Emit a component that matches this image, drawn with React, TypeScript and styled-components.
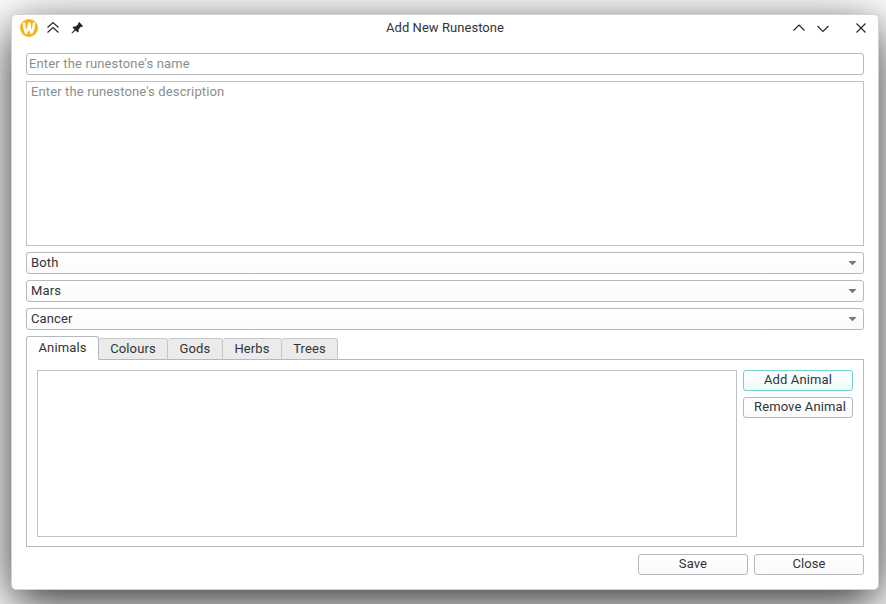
import React from 'react';
import styled, { createGlobalStyle } from 'styled-components';

const GlobalStyle = createGlobalStyle`
  * { box-sizing: border-box; }
  html, body { margin: 0; padding: 0; background: #fff; overflow: hidden; }
  body { font: 13px/20px Roboto, sans-serif; letter-spacing: 0.12px; color: #313437; }
  button, input, textarea { font: inherit; letter-spacing: inherit; color: inherit; margin: 0; outline: 0; }
`;

const Desktop = styled.div`
  width: 886px;
  height: 604px;
  padding: 14px 7px 14px 11px;
  overflow: hidden;
`;

const Window = styled.main`
  display: flex;
  flex-direction: column;
  width: 868px;
  height: 576px;
  background: #fff;
  border: 1px solid #d2d3d4;
  border-radius: 5px;
  box-shadow: 0 13px 48px rgba(0, 0, 0, 0.82);
`;

const TitleBar = styled.header`
  display: grid;
  grid-template-columns: 1fr auto 1fr;
  align-items: center;
  height: 26px;
  padding: 0 8px;
  flex: none;
`;

const Controls = styled.div<{ $end?: boolean }>`
  display: flex;
  align-items: center;
  gap: 6px;
  justify-content: ${(p) => (p.$end ? 'flex-end' : 'flex-start')};
  svg { display: block; }
`;

const Gap = styled.span`
  width: 8px;
`;

const Title = styled.h1`
  margin: 0;
  padding-bottom: 1px;
  line-height: 19px;
  font-size: 13px;
  font-weight: 400;
  letter-spacing: 0.05px;
`;

const Form = styled.div`
  display: flex;
  flex-direction: column;
  gap: 6px;
  padding: 12px 14px 0;
`;

const NameInput = styled.input`
  height: 22px;
  padding: 0 2px 2px;
  border: 1px solid #b7b8b9;
  border-radius: 3px;
  background: #fff;
  letter-spacing: 0.15px;
  &::placeholder { color: #8c8d8e; opacity: 1; }
`;

const Description = styled.textarea`
  display: block;
  height: 165px;
  padding: 0 4px;
  border: 1px solid #c0c1c2;
  border-radius: 0;
  resize: none;
  background: #fff;
  letter-spacing: 0.13px;
  &::placeholder { color: #8c8d8e; opacity: 1; }
`;

const Select = styled.div`
  display: flex;
  align-items: center;
  justify-content: space-between;
  height: 22px;
  padding: 0 6px 0 4px;
  border: 1px solid #b7b8b9;
  border-radius: 3px;
  background: linear-gradient(#fff, #fafafa);
`;

const Tabs = styled.section`
  display: flex;
  flex-direction: column;
`;

const TabBar = styled.div`
  display: flex;
  align-items: flex-end;
  height: 24px;
  z-index: 1;
`;

const Tab = styled.button<{ $width: number; $active?: boolean }>`
  width: ${(p) => p.$width}px;
  height: ${(p) => (p.$active ? 24 : 22)}px;
  padding: 0 0 1px;
  line-height: 20px;
  border: 1px solid ${(p) => (p.$active ? '#b7b8b9' : '#c6c7c8')};
  border-left-width: ${(p) => (p.$active ? 1 : 0)}px;
  border-bottom-color: ${(p) => (p.$active ? '#fff' : '#b7b8b9')};
  border-radius: 3px 3px 0 0;
  background: ${(p) => (p.$active ? '#fff' : '#ebebeb')};
`;

const Panel = styled.div`
  display: flex;
  gap: 6px;
  height: 188px;
  margin-top: -1px;
  padding: 10px;
  border: 1px solid #b7b8b9;
`;

const List = styled.div`
  flex: 1;
  height: 167px;
  border: 1px solid #c0c1c2;
`;

const Actions = styled.div`
  display: flex;
  flex-direction: column;
  gap: 6px;
`;

const Button = styled.button<{ $focus?: boolean; $shift?: number }>`
  width: 110px;
  height: 21px;
  padding: 0 0 2px ${(p) => p.$shift ?? 0}px;
  line-height: 17px;
  white-space: nowrap;
  border: 1px solid ${(p) => (p.$focus ? '#6fd3cc' : '#b7b8b9')};
  border-radius: 3px;
  background: ${(p) => (p.$focus ? 'linear-gradient(#fff, #effafa)' : 'linear-gradient(#fff, #fafafa)')};
`;

const Footer = styled.footer`
  display: flex;
  justify-content: flex-end;
  gap: 6px;
  margin-top: 1px;
`;

const WaylandLogo = () => (
  <svg width="18" height="18" viewBox="0 0 18 18">
    <circle cx="9" cy="9" r="9" fill="#f3b61c" />
    <path d="M4 3.6C4.3 8.6 5 11.8 6.1 13.8C7.7 11.3 8.8 8.2 9.4 4.8C9.4 8.6 10.2 11.8 11.5 13.8C13 11.3 13.9 7.5 14.1 3.6" fill="none" stroke="#fff" strokeWidth="2.5" strokeLinejoin="round" strokeLinecap="butt" />
  </svg>
);

const LineIcon = ({ d }: { d: string }) => (
  <svg width="18" height="18" viewBox="0 0 18 18">
    <path d={d} fill="none" stroke="#232629" strokeWidth="1.15" />
  </svg>
);

const PinIcon = () => (
  <svg width="18" height="18" viewBox="0 0 18 18">
    <path d="M11.2 3L15 6.9L14 7.9L12.9 7.8L10.6 10.4V12.4L9.6 13.4L7.5 11.4L4 14.6L3.4 14L6.5 10.5L4.5 8.4L5.5 7.6H7.5L10.2 5.2V4Z" fill="#232629" />
  </svg>
);

const DownArrow = () => (
  <svg width="9" height="5" viewBox="0 0 9 5">
    <path d="M0.5 0H8.5L4.5 4.2Z" fill="#737576" />
  </svg>
);

const tabs = [
  { label: 'Animals', width: 73 },
  { label: 'Colours', width: 69 },
  { label: 'Gods', width: 55 },
  { label: 'Herbs', width: 59 },
  { label: 'Trees', width: 56 },
];

export default function App() {
  return (
    <>
      <GlobalStyle />
      <Desktop>
        <Window>
          <TitleBar>
            <Controls>
              <WaylandLogo />
              <LineIcon d="M3.5 8.5L9 3.5L14.5 8.5M3.5 13.5L9 8.5L14.5 13.5" />
              <PinIcon />
            </Controls>
            <Title>Add New Runestone</Title>
            <Controls $end>
              <LineIcon d="M3.5 11.5L9 6L14.5 11.5" />
              <LineIcon d="M3.5 7L9 12.5L14.5 7" />
              <Gap />
              <LineIcon d="M4.5 4.5L13.5 13.5M13.5 4.5L4.5 13.5" />
            </Controls>
          </TitleBar>
          <Form>
            <NameInput placeholder="Enter the runestone's name" />
            <Description placeholder="Enter the runestone's description" />
            {['Both', 'Mars', 'Cancer'].map((value) => (
              <Select key={value}>
                <span>{value}</span>
                <DownArrow />
              </Select>
            ))}
            <Tabs>
              <TabBar>
                {tabs.map((tab, i) => (
                  <Tab key={tab.label} $width={tab.width} $active={i === 0}>{tab.label}</Tab>
                ))}
              </TabBar>
              <Panel>
                <List />
                <Actions>
                  <Button $focus>Add Animal</Button>
                  <Button $shift={4}>Remove Animal</Button>
                </Actions>
              </Panel>
            </Tabs>
            <Footer>
              <Button>Save</Button>
              <Button>Close</Button>
            </Footer>
          </Form>
        </Window>
      </Desktop>
    </>
  );
}
